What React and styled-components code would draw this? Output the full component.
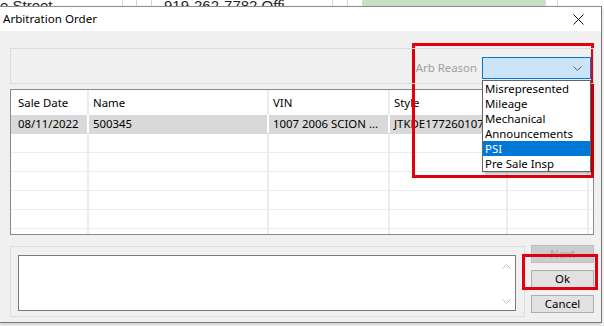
import React from 'react';
import styled, {createGlobalStyle} from 'styled-components';

const UI_FONT = '"Segoe UI", "Noto Sans", "Open Sans", sans-serif';

const GlobalStyle = createGlobalStyle`
    html, body {
        margin: 0;
        padding: 0;
        background: #ffffff;
    }
`

const columns = [
    {title: 'Sale Date'},
    {title: 'Name'},
    {title: 'VIN'},
    {title: 'Style'},
    {title: ''},
    {title: ''},
];

const rows = [
    ['08/11/2022', '500345', '1007 2006 SCION ...', 'JTKDE177260107122', '', ''],
    ['', '', '', '', '', ''],
    ['', '', '', '', '', ''],
    ['', '', '', '', '', ''],
    ['', '', '', '', '', ''],
    ['', '', '', '', '', ''],
    ['', '', '', '', '', ''],
];

const reasons = ['Misrepresented', 'Mileage', 'Mechanical', 'Announcements', 'PSI', 'Pre Sale Insp'];

const Chevron = ({up, color}) => (
    <svg width="9" height="5" viewBox="0 0 9 5">
        <polyline
            points={up ? '0.5,4.5 4.5,0.5 8.5,4.5' : '0.5,0.5 4.5,4.5 8.5,0.5'}
            fill="none"
            stroke={color}
            strokeWidth="1"/>
    </svg>
);

const App = () => {
    return (
        <Screen>
            <GlobalStyle/>
            {/* spreadsheet behind the dialog */}
            <Backdrop>
                <BackCell $w={123} $pad={0}>e Street</BackCell>
                <BackCell $w={14}/>
                <BackCell $w={15}/>
                <BackCell $w={181} $pad={12}>919-262-7782 Offi</BackCell>
                <BackCell $w={15}/>
                <BackCell $w={210} $pad={14}><GreenBar/></BackCell>
                <BackCell $w={46} $last={true}/>
            </Backdrop>

            <Window>
                <TitleBar>
                    <Title>Arbitration Order</Title>
                    <CloseButton>
                        <svg width="11" height="11" viewBox="0 0 11 11">
                            <path d="M0.5 0.5 L10.5 10.5 M10.5 0.5 L0.5 10.5" stroke="#111" strokeWidth="1"/>
                        </svg>
                    </CloseButton>
                </TitleBar>

                <Body>
                    <ToolPanel>
                        <FieldRow>
                            <FieldLabel>Arb Reason</FieldLabel>
                            <ComboWrap>
                                <Combo>
                                    <Chevron color="#5a5a5a"/>
                                </Combo>
                                <DropList>
                                    {reasons.map((r) => (
                                        <DropItem key={r} $selected={r === 'PSI'}>{r}</DropItem>
                                    ))}
                                </DropList>
                            </ComboWrap>
                        </FieldRow>
                    </ToolPanel>

                    <Grid>
                        <GridRow $header={true}>
                            {columns.map((c, i) => (
                                <Cell key={i} $first={i === 0}>{c.title}</Cell>
                            ))}
                        </GridRow>
                        {rows.map((r, ri) => (
                            <GridRow key={ri} $selected={ri === 0}>
                                {r.map((v, ci) => (
                                    <Cell key={ci} $first={ci === 0} $selected={ri === 0}>{v}</Cell>
                                ))}
                            </GridRow>
                        ))}
                    </Grid>

                    <BottomRow>
                        <NotePanel>
                            <TextArea>
                                <TextInput/>
                                <ScrollBar>
                                    <Chevron up={true} color="#c4c4c4"/>
                                    <Chevron color="#c4c4c4"/>
                                </ScrollBar>
                            </TextArea>
                        </NotePanel>
                        <Buttons>
                            <Button $disabled={true}>Next</Button>
                            <Button>Ok</Button>
                            <Button>Cancel</Button>
                        </Buttons>
                    </BottomRow>
                </Body>
            </Window>

            <Highlight $x={412} $y={43} $w={182} $h={135}/>
            <Highlight $x={522} $y={254} $w={76} $h={36}/>
        </Screen>
    )
}

export default App

/////////////////// screen & backdrop ////////////////////

const Screen = styled.div`
    position: relative;
    width: 604px;
    height: 326px;
    overflow: hidden;
    background: #ffffff;
    font-family: ${UI_FONT};
    font-size: 11.4px;
    color: #000;
`
const Backdrop = styled.div`
    display: flex;
    height: 6px;
    overflow: hidden;
    background: #ffffff;
`
const BackCell = styled.div`
    flex: none;
    width: ${p => p.$w}px;
    box-sizing: border-box;
    padding-left: ${p => p.$pad || 0}px;
    border-right: ${p => p.$last ? 'none' : '1px solid #d4d4d4'};
    font-family: "Liberation Sans", "Noto Sans", sans-serif;
    font-size: 15px;
    line-height: 16px;
    margin-top: -2px;
    color: #262626;
    white-space: nowrap;
    overflow: hidden;
`
const GreenBar = styled.div`
    width: 184px;
    height: 12px;
    margin-top: 1px;
    background: #c5e0c4;
    border-radius: 3px;
`

/////////////////// window ////////////////////

const Window = styled.div`
    width: 601px;
    margin-left: -1px;
    border: 1px solid #7a7a7a;
    border-top-color: #8c8c8c;
    box-shadow: 0 2px 4px rgba(0, 0, 0, 0.22);
    background: #f0f0f0;
`
const TitleBar = styled.div`
    height: 24px;
    display: flex;
    align-items: center;
    justify-content: space-between;
    background: #ffffff;
    padding-left: 3px;
    padding-right: 17px;
`
const Title = styled.div`
    font-size: 11.6px;
    line-height: 16px;
    color: #000;
`
const CloseButton = styled.div`
    display: flex;
    align-items: center;
    justify-content: center;
    width: 11px;
    height: 11px;
    margin-top: 1px;
`
const Body = styled.div`
    height: 291px;
    box-sizing: border-box;
    padding: 17px 7px 0 10px;
    display: flex;
    flex-direction: column;
`

/////////////////// tool panel & combo ////////////////////

const ToolPanel = styled.div`
    height: 36px;
    box-sizing: border-box;
    border: 1px solid #dadada;
    display: flex;
    justify-content: flex-end;
    align-items: flex-start;
    padding: 8px 2px 0 0;
    position: relative;
    z-index: 2;
`
const FieldRow = styled.div`
    display: flex;
    align-items: center;
    gap: 5px;
`
const FieldLabel = styled.div`
    color: #9d9d9d;
    line-height: 16px;
`
const ComboWrap = styled.div`
    position: relative;
`
const Combo = styled.div`
    width: 109px;
    height: 22px;
    box-sizing: border-box;
    border: 1px solid #0078d7;
    background: #cce4f7;
    display: flex;
    align-items: center;
    justify-content: flex-end;
    padding-right: 8px;
`
const DropList = styled.div`
    position: absolute;
    top: 23px;
    left: 0;
    width: 109px;
    box-sizing: border-box;
    border: 1px solid #646464;
    background: #ffffff;
    box-shadow: 2px 2px 3px rgba(0, 0, 0, 0.3);
`
const DropItem = styled.div`
    height: 15px;
    line-height: 15px;
    padding-left: 2px;
    white-space: nowrap;
    background: ${p => p.$selected ? '#0078d7' : 'transparent'};
    color: ${p => p.$selected ? '#ffffff' : '#000000'};
`

/////////////////// grid ////////////////////

const Grid = styled.div`
    margin-top: 5px;
    height: 146px;
    box-sizing: border-box;
    border: 1px solid #8a8a8a;
    background: #ffffff;
    overflow: hidden;
`
const GridRow = styled.div`
    display: grid;
    grid-template-columns: 76px 180px 121px 118px 81px 1fr;
    height: ${p => p.$header ? 25 : 19}px;
    box-sizing: border-box;
    border-bottom: ${p => p.$header ? 'none' : `1px solid ${p.$selected ? '#d9d9d9' : '#ebebeb'}`};
    background: ${p => p.$selected ? '#d9d9d9' : '#ffffff'};
`
const Cell = styled.div`
    display: flex;
    align-items: center;
    padding-left: ${p => p.$first ? 7 : 4}px;
    border-left: ${p => p.$first ? 'none' : `2px solid ${p.$selected ? '#ffffff' : '#ececec'}`};
    white-space: nowrap;
    overflow: hidden;
    line-height: 16px;
`

/////////////////// bottom ////////////////////

const BottomRow = styled.div`
    margin-top: 11px;
    display: flex;
    align-items: flex-start;
    gap: 6px;
`
const NotePanel = styled.div`
    width: 516px;
    height: 71px;
    box-sizing: border-box;
    border: 1px solid #dcdcdc;
    padding: 8px 8px 0 7px;
`
const TextArea = styled.div`
    height: 56px;
    box-sizing: border-box;
    border: 1px solid #7a7a7a;
    background: #ffffff;
    display: flex;
`
const TextInput = styled.div`
    flex: 1;
`
const ScrollBar = styled.div`
    width: 17px;
    display: flex;
    flex-direction: column;
    align-items: center;
    justify-content: space-between;
    padding: 8px 0 6px;
`
const Buttons = styled.div`
    margin-top: -1px;
    width: 63px;
    display: flex;
    flex-direction: column;
    gap: 7px;
`
const Button = styled.div`
    height: 18px;
    box-sizing: border-box;
    border: 1px solid ${p => p.$disabled ? '#bfbfbf' : '#adadad'};
    background: ${p => p.$disabled ? '#cccccc' : '#e1e1e1'};
    color: ${p => p.$disabled ? '#a3a3a3' : '#000000'};
    display: flex;
    align-items: center;
    justify-content: center;
    line-height: 16px;
`

/////////////////// annotations ////////////////////

const Highlight = styled.div`
    position: absolute;
    left: ${p => p.$x}px;
    top: ${p => p.$y}px;
    width: ${p => p.$w}px;
    height: ${p => p.$h}px;
    box-sizing: border-box;
    border: 3px solid #e1000e;
    pointer-events: none;
`
